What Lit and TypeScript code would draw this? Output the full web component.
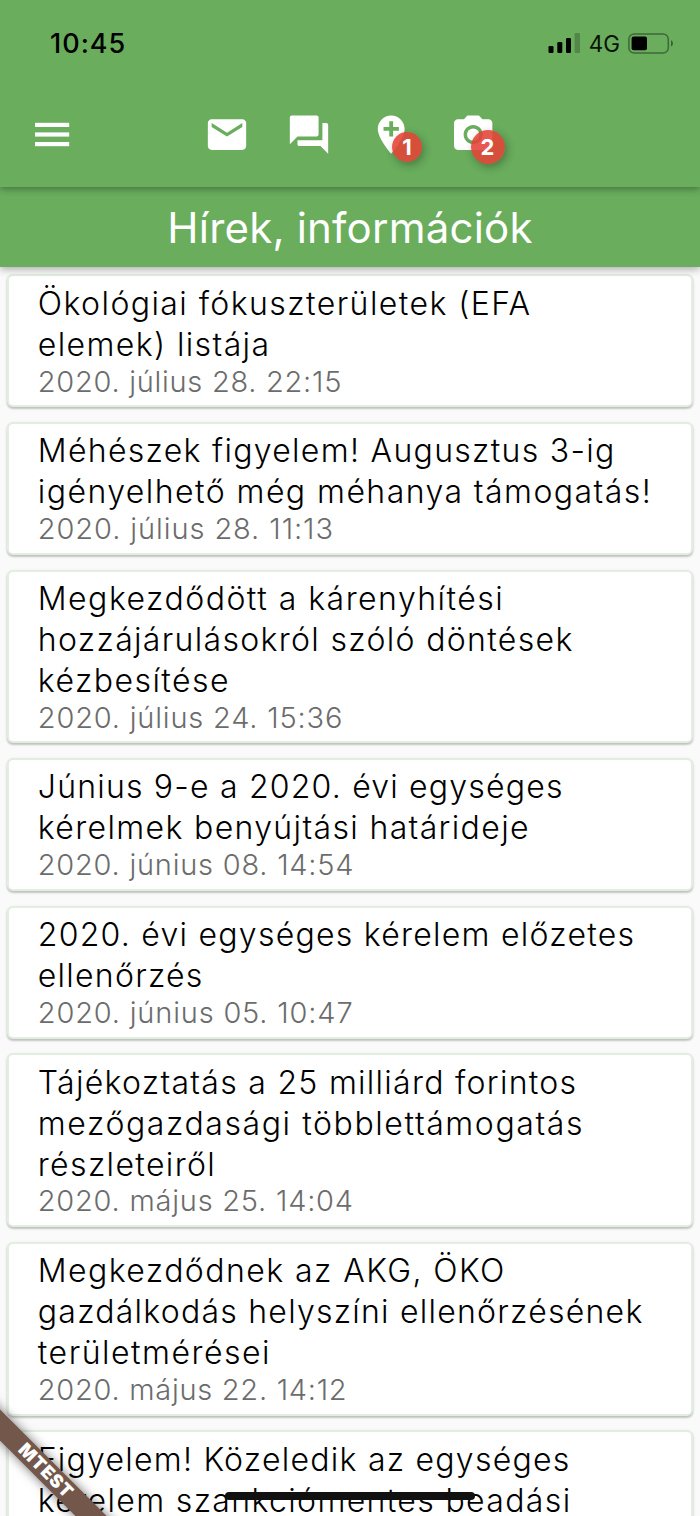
import { LitElement, html, css, nothing } from "lit";
import { customElement, property } from "lit/decorators.js";
import { styleMap } from "lit/directives/style-map.js";

// A run of text with its tracking in pixels.
type Run = [text: string, tracking: number];

interface NewsItem {
  lines: Run[];
  date?: Run;
}

const NEWS: NewsItem[] = [
  { lines: [["Ökológiai fókuszterületek (EFA", 1.42], ["elemek) listája", 1.38]], date: ["2020. július 28. 22:15", 0.73] },
  { lines: [["Méhészek figyelem! Augusztus 3-ig", 1.3], ["igényelhető még méhanya támogatás!", 1.44]], date: ["2020. július 28. 11:13", 0.92] },
  { lines: [["Megkezdődött a kárenyhítési", 1.48], ["hozzájárulásokról szóló döntések", 1.32], ["kézbesítése", 1.45]], date: ["2020. július 24. 15:36", 0.82] },
  { lines: [["Június 9-e a 2020. évi egységes", 1.2], ["kérelmek benyújtási határideje", 1.35]], date: ["2020. június 08. 14:54", 0.77] },
  { lines: [["2020. évi egységes kérelem előzetes", 1.25], ["ellenőrzés", 1.25]], date: ["2020. június 05. 10:47", 0.82] },
  { lines: [["Tájékoztatás a 25 milliárd forintos", 1.28], ["mezőgazdasági többlettámogatás", 1.58], ["részleteiről", 1.35]], date: ["2020. május 25. 14:04", 0.77] },
  { lines: [["Megkezdődnek az AKG, ÖKO", 1.43], ["gazdálkodás helyszíni ellenőrzésének", 1.24], ["területmérései", 1.5]], date: ["2020. május 22. 14:12", 0.73] },
  { lines: [["Figyelem! Közeledik az egységes", 1.24], ["kérelem szankciómentes beadási", 1.35]] },
];

@customElement("news-card")
class NewsCard extends LitElement {
  @property({ attribute: false }) item!: NewsItem;

  static styles = css`
    :host {
      display: block;
      box-sizing: border-box;
      padding: 7.4px 28.5px 7.6px;
      background: #fff;
      border: 2px solid #e1eee0;
      border-radius: 6px;
      box-shadow: 0 2px 2px rgba(0, 0, 0, 0.16), 0 1px 3px rgba(0, 0, 0, 0.12);
    }
    .line {
      display: block;
      white-space: nowrap;
      font-size: 32px;
      line-height: 40.95px;
      font-weight: 300;
      color: #000;
    }
    .date {
      display: block;
      font-size: 29px;
      line-height: 32px;
      font-weight: 300;
      color: #6c6c6c;
      white-space: nowrap;
    }
  `;

  private run(cls: string, [text, tracking]: Run) {
    return html`<span class=${cls} style=${styleMap({ letterSpacing: `${tracking}px` })}>${text}</span>`;
  }

  render() {
    const { lines, date } = this.item;
    return html`${lines.map((l) => this.run("line", l))}${date ? this.run("date", date) : nothing}`;
  }
}

@customElement("app-root")
class AppRoot extends LitElement {
  static styles = css`
    :host {
      display: flex;
      flex-direction: column;
      position: relative;
      width: 700px;
      height: 1516px;
      overflow: hidden;
      background: #fafafa;
      font-family: Inter, "Noto Sans", sans-serif;
    }
    svg {
      display: block;
    }
    .top {
      position: relative;
      z-index: 3;
      flex: none;
      height: 187px;
      background: #69ad5d;
      box-shadow: 0 2px 7px rgba(0, 0, 0, 0.34);
    }
    .status {
      display: flex;
      align-items: center;
      height: 86px;
      padding: 0 26px 0 50px;
    }
    .clock {
      flex: 1;
      font-size: 27px;
      font-weight: 500;
      letter-spacing: 1px;
      color: #000;
    }
    .net {
      margin: 0 8px 0 9px;
      font-size: 22.5px;
      color: #0a1408;
    }
    .tools {
      display: flex;
      align-items: center;
      height: 97px;
      padding-left: 24px;
    }
    .icons {
      display: flex;
      gap: 36px;
      margin-left: 133.5px;
    }
    .slot {
      position: relative;
      width: 46px;
      height: 46px;
      fill: #fff;
    }
    .badge {
      position: absolute;
      display: flex;
      align-items: center;
      justify-content: center;
      border-radius: 50%;
      background: rgba(228, 66, 54, 0.88);
      box-shadow: 2px 3px 9px rgba(0, 0, 0, 0.3);
      color: #fff;
      font-size: 22px;
      font-weight: 700;
    }
    .b1 {
      left: 24.5px;
      top: 20.5px;
      width: 30px;
      height: 30px;
    }
    .b2 {
      left: 21px;
      top: 18.5px;
      width: 34px;
      height: 34px;
    }
    .title {
      position: relative;
      z-index: 2;
      flex: none;
      height: 80px;
      line-height: 81px;
      text-align: center;
      background: #69ad5d;
      box-shadow: 0 2px 8px rgba(0, 0, 0, 0.34);
      color: #fff;
      font-size: 42px;
      font-weight: 400;
      letter-spacing: 0.2px;
      white-space: nowrap;
    }
    .list {
      display: flex;
      flex-direction: column;
      gap: 14.7px;
      padding: 7.4px 7.3px 0;
    }
    .home {
      position: absolute;
      z-index: 4;
      left: 225px;
      top: 1492px;
      width: 250px;
      height: 8px;
      border-radius: 4px;
      background: #111;
    }
    .ribbon {
      position: absolute;
      z-index: 5;
      left: -74px;
      top: 1460px;
      width: 240px;
      height: 22px;
      line-height: 22px;
      transform: rotate(45deg);
      background: #73574a;
      box-shadow: 0 0 11px rgba(0, 0, 0, 0.55);
      color: #fff;
      text-align: center;
      font-size: 18px;
      font-weight: 900;
      letter-spacing: 0.8px;
    }
  `;

  render() {
    return html`
      <header class="top">
        <div class="status">
          <span class="clock">10:45</span>
          <svg width="32" height="20" viewBox="0 0 32 20">
            <rect x="0.5" y="13" width="5" height="7" rx="1.2" />
            <rect x="9.3" y="9" width="5" height="11" rx="1.2" />
            <rect x="18" y="5" width="5" height="15" rx="1.2" />
            <rect x="26.6" y="0" width="5.4" height="20" rx="1.2" opacity="0.22" />
          </svg>
          <span class="net">4G</span>
          <svg width="46" height="21" viewBox="0 0 46 21">
            <rect x="0.9" y="0.9" width="39.4" height="19.2" rx="5.2" fill="none" stroke="#000" stroke-opacity="0.4" stroke-width="1.5" />
            <rect x="3.6" y="3.6" width="15.4" height="13.6" rx="2" />
            <path d="M43 7.2c2.6 1.1 2.6 5.3 0 6.4z" opacity="0.45" />
          </svg>
        </div>
        <div class="tools">
          <svg width="46" height="46" viewBox="0 0 46 46" fill="#fff">
            <rect x="11" y="10.8" width="34.2" height="4.2" />
            <rect x="11" y="20.4" width="34.2" height="4.2" />
            <rect x="11" y="30" width="34.2" height="4.2" />
          </svg>
          <div class="icons">
            <div class="slot">
              <svg width="46" height="46" viewBox="0 0 24 24">
                <path d="M20 4H4c-1.1 0-1.99.9-1.99 2L2 18c0 1.1.9 2 2 2h16c1.1 0 2-.9 2-2V6c0-1.1-.9-2-2-2zm0 4l-8 5-8-5V6l8 5 8-5v2z" transform="translate(0 -.2)" />
              </svg>
            </div>
            <div class="slot">
              <svg width="46" height="46" viewBox="0 0 24 24">
                <path d="M21 6h-2v9H6v2c0 .55.45 1 1 1h11l4 4V7c0-.55-.45-1-1-1zm-4 6V3c0-.55-.45-1-1-1H3c-.55 0-1 .45-1 1v14l4-4h10c.55 0 1-.45 1-1z" transform="translate(0 -.2)" />
              </svg>
            </div>
            <div class="slot">
              <svg width="46" height="46" viewBox="0 0 24 24">
                <path d="M12 2C8.14 2 5 5.14 5 9c0 5.25 7 13 7 13s7-7.75 7-13c0-3.86-3.14-7-7-7zm4 8h-3v3h-2v-3H8V8h3V5h2v3h3v2z" transform="translate(.1 -.2)" />
              </svg>
              <span class="badge b1">1</span>
            </div>
            <div class="slot">
              <svg width="46" height="46" viewBox="0 0 24 24">
                <g transform="translate(.1 -.2)">
                  <circle cx="12" cy="12" r="3.2" />
                  <path d="M9 2L7.17 4H4c-1.1 0-2 .9-2 2v12c0 1.1.9 2 2 2h16c1.1 0 2-.9 2-2V6c0-1.1-.9-2-2-2h-3.17L15 2H9zm3 15c-2.76 0-5-2.24-5-5s2.24-5 5-5 5 2.24 5 5-2.24 5-5 5z" />
                </g>
              </svg>
              <span class="badge b2">2</span>
            </div>
          </div>
        </div>
      </header>
      <div class="title">Hírek, információk</div>
      <main class="list">${NEWS.map((n) => html`<news-card .item=${n}></news-card>`)}</main>
      <div class="home"></div>
      <div class="ribbon">MTEST</div>
    `;
  }
}
